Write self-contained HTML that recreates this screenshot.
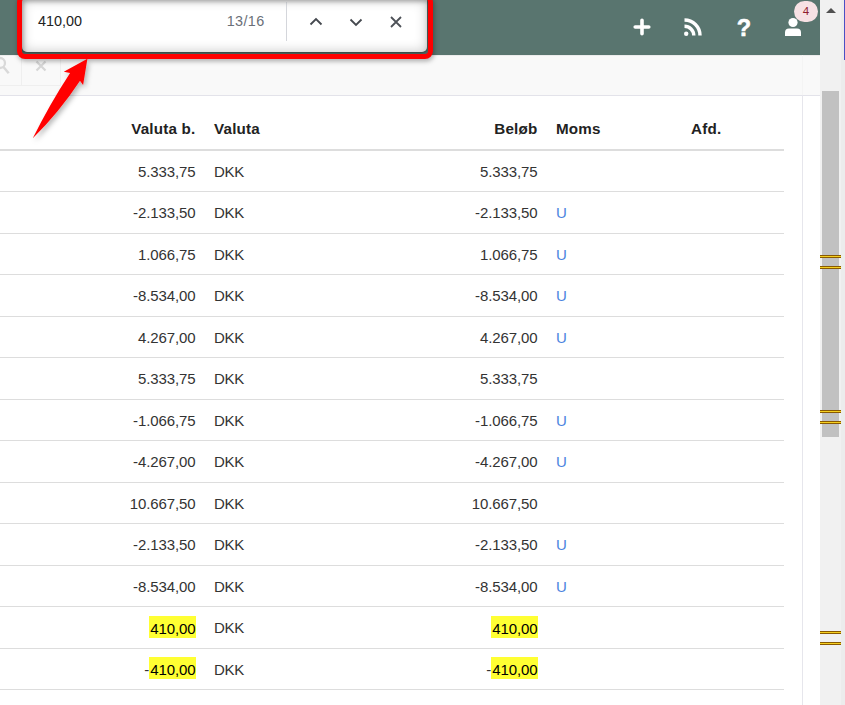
<!DOCTYPE html>
<html lang="da">
<head>
<meta charset="utf-8">
<title>Posteringer</title>
<style>
html,body{margin:0;padding:0;}
body{width:845px;height:705px;overflow:hidden;background:#fff;position:relative;
  font-family:"Liberation Sans",sans-serif;font-size:14.5px;color:#333;}
#hdr{position:absolute;left:0;top:0;width:820px;height:55px;background:#59756f;}
#tb{position:absolute;left:0;top:55px;width:820px;height:40px;background:#f9f9f9;border-bottom:1px solid #e3e3ea;box-shadow:inset 0 1px 0 #ececec;}
#tb .b1{position:absolute;left:0;top:0;width:21px;height:30px;border-right:1px solid #efefef;border-bottom:1px solid #efefef;}
#tb .b2{position:absolute;left:22px;top:0;width:38px;height:30px;border-right:1px solid #efefef;border-bottom:1px solid #efefef;}
#vline{position:absolute;left:802px;top:55px;width:1px;height:650px;background:#e6e6ec;}
#vline2{position:absolute;left:802px;top:55px;width:1px;height:40px;background:#f4f4f4;}

/* table */
table{position:absolute;left:0;top:107px;width:784px;border-collapse:collapse;table-layout:fixed;}
th,td{padding:0 9px;height:41.5px;box-sizing:border-box;white-space:nowrap;overflow:hidden;}
th{height:43px;font-weight:bold;color:#222;font-size:15.2px;letter-spacing:.2px;padding-top:1px;border-bottom:2px solid #ddd;text-align:left;}
td{border-bottom:1px solid #ddd;padding-top:1px;font-size:15px;letter-spacing:-.12px;}
.r{text-align:right;padding-right:9.6px;}
th.r{padding-right:9.5px;}
td.m{color:#4b84e0;}
td.c{letter-spacing:-.3px;}
mark{background:#ffff33;color:#000;padding:3.5px 1px 1.5px;margin-right:-1px;}

/* scrollbar */
#sb{position:absolute;left:820px;top:0;width:25px;height:705px;background:#f1f1f1;}
#sb .edge{position:absolute;left:21px;top:0;width:4px;height:705px;background:#ececec;}
#sb .blue{position:absolute;left:23.5px;top:0;width:2px;height:60px;background:#4a4fc4;}
#sb .thumb{position:absolute;left:2px;top:91px;width:17px;height:346px;background:#c1c1c1;}
#sb .arr{position:absolute;left:5.5px;top:7.5px;width:0;height:0;border-left:5px solid transparent;border-right:5px solid transparent;border-bottom:5.5px solid #505050;}
.mk{position:absolute;left:0;width:21px;height:3px;background:#8a5a00;}
.mk:after{content:"";position:absolute;left:0;top:1px;width:100%;height:1px;background:#f5d020;}

/* find bar */
#find{position:absolute;left:22px;top:-1px;width:405px;height:52.8px;background:#fff;border-radius:0 0 5px 5px;
  box-shadow:0 1px 3px rgba(0,0,0,.5), inset 0 0 12px 1px rgba(0,0,0,.2);}
#find .q{position:absolute;left:16px;top:14px;font-size:14.4px;color:#222;}
#find .cnt{position:absolute;right:162.5px;top:14px;font-size:14.4px;letter-spacing:.35px;color:#6a6f78;}
#find .sep{position:absolute;left:264px;top:3px;width:1px;height:39px;background:#d4d6db;}
#red{position:absolute;left:17px;top:-6.5px;width:406px;height:55.3px;border:5px solid #ff0000;border-radius:8px;
  filter:drop-shadow(1.5px 2px 2.5px rgba(0,0,0,.35));}
svg{position:absolute;overflow:visible;}
</style>
</head>
<body>
<div id="hdr">
  <svg style="left:633px;top:18px" width="18" height="18" viewBox="0 0 18 18"><path d="M9 2.2v13.6M2.2 9h13.6" stroke="#fff" stroke-width="3.6" stroke-linecap="round" fill="none"/></svg>
  <svg style="left:683px;top:18px" width="19" height="19" viewBox="0 0 19 19"><circle cx="3.2" cy="15.8" r="2.2" fill="#fff"/><path d="M1.5 8.2a9.3 9.3 0 0 1 9.3 9.3M1.5 2a15.5 15.5 0 0 1 15.5 15.5" stroke="#fff" stroke-width="3.4" fill="none"/></svg>
  <div style="position:absolute;left:736px;top:13.5px;width:16px;text-align:center;color:#fff;font-weight:bold;font-size:23.5px;line-height:28px;-webkit-text-stroke:.6px #fff;">?</div>
  <svg style="left:784px;top:17px" width="18" height="20" viewBox="0 0 18 20"><circle cx="9" cy="5.5" r="4.6" fill="#fff"/><path d="M1 19v-3.5a4 4 0 0 1 4-4h8a4 4 0 0 1 4 4V19z" fill="#fff"/></svg>
  <div style="position:absolute;left:794px;top:1px;width:24px;height:21px;border-radius:11px;background:#f7e1e4;color:#8e1b2e;font-size:11.5px;line-height:21px;text-align:center;">4</div>
</div>
<div id="tb"><div class="b1"></div><div class="b2"></div>
  <svg style="left:-6px;top:2px" width="16" height="18" viewBox="0 0 16 18"><circle cx="6" cy="6" r="5" stroke="#d9d9d9" stroke-width="2.3" fill="none"/><path d="M9.5 10l5.2 6.2" stroke="#d9d9d9" stroke-width="2.5"/></svg>
  <svg style="left:36px;top:6.2px" width="10" height="10" viewBox="0 0 10 10"><path d="M0.5 0.5l9 9M9.5 0.5l-9 9" stroke="#d6d6d6" stroke-width="2.2"/></svg>
</div>
<div id="vline"></div><div id="vline2"></div>

<table>
<colgroup><col style="width:205px"><col style="width:137px"><col style="width:205px"><col style="width:135px"><col style="width:102px"></colgroup>
<thead><tr><th class="r">Valuta b.</th><th>Valuta</th><th class="r">Beløb</th><th>Moms</th><th>Afd.</th></tr></thead>
<tbody>
<tr><td class="r">5.333,75</td><td class="c">DKK</td><td class="r">5.333,75</td><td class="m"></td><td></td></tr>
<tr><td class="r">-2.133,50</td><td class="c">DKK</td><td class="r">-2.133,50</td><td class="m">U</td><td></td></tr>
<tr><td class="r">1.066,75</td><td class="c">DKK</td><td class="r">1.066,75</td><td class="m">U</td><td></td></tr>
<tr><td class="r">-8.534,00</td><td class="c">DKK</td><td class="r">-8.534,00</td><td class="m">U</td><td></td></tr>
<tr><td class="r">4.267,00</td><td class="c">DKK</td><td class="r">4.267,00</td><td class="m">U</td><td></td></tr>
<tr><td class="r">5.333,75</td><td class="c">DKK</td><td class="r">5.333,75</td><td class="m"></td><td></td></tr>
<tr><td class="r">-1.066,75</td><td class="c">DKK</td><td class="r">-1.066,75</td><td class="m">U</td><td></td></tr>
<tr><td class="r">-4.267,00</td><td class="c">DKK</td><td class="r">-4.267,00</td><td class="m">U</td><td></td></tr>
<tr><td class="r">10.667,50</td><td class="c">DKK</td><td class="r">10.667,50</td><td class="m"></td><td></td></tr>
<tr><td class="r">-2.133,50</td><td class="c">DKK</td><td class="r">-2.133,50</td><td class="m">U</td><td></td></tr>
<tr><td class="r">-8.534,00</td><td class="c">DKK</td><td class="r">-8.534,00</td><td class="m">U</td><td></td></tr>
<tr><td class="r"><mark>410,00</mark></td><td class="c">DKK</td><td class="r"><mark>410,00</mark></td><td class="m"></td><td></td></tr>
<tr><td class="r">-<mark>410,00</mark></td><td class="c">DKK</td><td class="r">-<mark>410,00</mark></td><td class="m"></td><td></td></tr>
<tr><td class="r">&nbsp;</td><td></td><td class="r"></td><td class="m"></td><td></td></tr>
</tbody>
</table>

<div id="sb"><div class="edge"></div><div class="blue"></div><div class="arr"></div><div class="thumb"></div>
  <div class="mk" style="top:255px"></div><div class="mk" style="top:266px"></div>
  <div class="mk" style="top:410px"></div><div class="mk" style="top:421px"></div>
  <div class="mk" style="top:631px"></div><div class="mk" style="top:642px"></div>
</div>

<div id="find">
  <div class="q">410,00</div>
  <div class="cnt">13/16</div>
  <div class="sep"></div>
  <svg style="left:287px;top:18px" width="14" height="9" viewBox="0 0 14 9"><path d="M1.5 7.5l5.5-5.5 5.5 5.5" stroke="#45494f" stroke-width="1.8" fill="none"/></svg>
  <svg style="left:327px;top:19px" width="14" height="9" viewBox="0 0 14 9"><path d="M1.5 1.5l5.5 5.5 5.5-5.5" stroke="#45494f" stroke-width="1.8" fill="none"/></svg>
  <svg style="left:368.4px;top:17.3px" width="12" height="12" viewBox="0 0 12 12"><path d="M1 1l10 10M11 1l-10 10" stroke="#4d5157" stroke-width="1.8" fill="none"/></svg>
</div>
<div id="red"></div>
<svg style="left:0;top:0" width="845" height="705" viewBox="0 0 845 705">
  <defs><filter id="sh" x="-30%" y="-30%" width="170%" height="170%"><feDropShadow dx="2" dy="3" stdDeviation="2.5" flood-color="#000" flood-opacity=".28"/></filter></defs>
  <path d="M32.8 138.3 Q49.4 104.4 70.1 72.9 L63.8 71.8 L87.4 58.8 L83.1 85 L80 80.7 Q59.4 111.9 32.8 138.3 Z" fill="#ff0000" filter="url(#sh)"/>
</svg>
</body>
</html>
